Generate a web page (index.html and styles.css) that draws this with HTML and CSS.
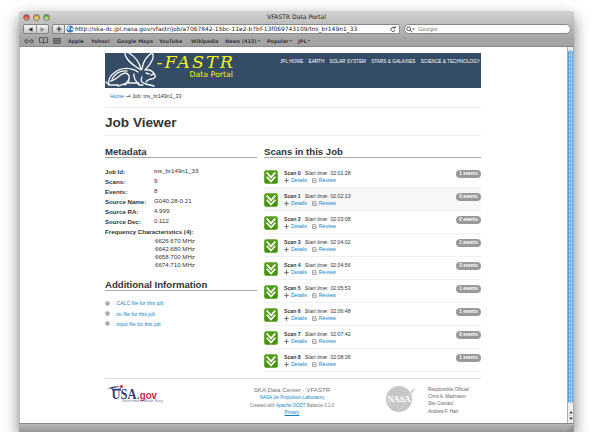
FILE: index.html
```html
<!DOCTYPE html>
<html lang="en">
<head>
<meta charset="utf-8">
<title>VFASTR Data Portal</title>
<link rel="stylesheet" href="styles.css">
</head>
<body>
<svg class="defs" width="0" height="0">
  <defs>
    <linearGradient id="leaf" x1="0" y1="0" x2="0" y2="1"><stop offset="0" stop-color="#57a01c"/><stop offset="1" stop-color="#409105"/></linearGradient>
    <symbol id="scan" viewBox="0 0 14 14"><rect x=".2" y=".2" width="13.6" height="13.6" rx="2" fill="url(#leaf)"/><path d="M2.7 2.5 7 7.4 11.3 2.5M2.7 6.8 7 11.6 11.3 6.8" fill="none" stroke="#fff" stroke-width="1.7"/></symbol>
    <symbol id="plus" viewBox="0 0 5 5"><path d="M2.5.3v4.4M.3 2.5h4.4" stroke="#777" stroke-width="1.2"/></symbol>
    <symbol id="review" viewBox="0 0 5 5"><path d="M4.3 2.4v2H.6V.6h3.2M1.4 2l1 1.1L4.5.8" fill="none" stroke="#888" stroke-width=".8"/></symbol>
    <symbol id="disc" viewBox="0 0 5 5"><circle cx="2.5" cy="2.5" r="1.8" fill="#d0d0d0" stroke="#999" stroke-width="1"/><path d="M2.5 1.4v2M1.6 2.5l.9.9.9-.9" fill="none" stroke="#888" stroke-width=".6"/></symbol>
  </defs>
</svg>
<div class="window">
  <header class="chrome">
    <div class="titlebar">
      <div class="lights"><i class="red"></i><i class="amber"></i><i class="green"></i></div>
      <span class="title">VFASTR Data Portal</span>
    </div>
    <div class="toolbar">
      <div class="nav-buttons"><span><svg width="5" height="5" viewBox="0 0 5 5"><path d="M4.5.3v4.4L.3 2.5z" fill="#333"/></svg></span><span><svg width="5" height="5" viewBox="0 0 5 5"><path d="M.5.3v4.4l4.2-2.2z" fill="#888"/></svg></span></div>
      <div class="add"><svg width="6" height="6" viewBox="0 0 6 6"><path d="M3 .5v5M.5 3h5" stroke="#333" stroke-width="1.2"/></svg></div>
      <div class="address">
        <svg width="8" height="8" viewBox="0 0 8 8"><circle cx="4" cy="4" r="3.6" fill="#3474c4"/><path d="M1 2.6 3 1l1.3.8L3.4 3l.5 1.2L2.5 5.6 1 4zM5 3l2-.5.4 2L6 6 4.8 4.6z" fill="#bfe0f5"/></svg>
        <span class="url">http://ska-dc.jpl.nasa.gov/vfastr/job/a7067842-15bc-11e2-b7bf-13f069743109/tns_br149n1_33</span>
        <svg class="reload" width="6" height="7" viewBox="0 0 6 7"><path d="M4.6 2A2.1 2.1 0 1 0 5 4M3 2h2.2V0" fill="none" stroke="#444" stroke-width=".9"/></svg>
      </div>
      <div class="search"><svg width="9" height="7" viewBox="0 0 9 7"><circle cx="2.6" cy="2.8" r="1.9" fill="none" stroke="#444" stroke-width=".9"/><path d="m4 4.2 2 2" stroke="#444"/><path d="M6 2.6h3L7.5 4z" fill="#555"/></svg><span>Google</span></div>
    </div>
    <nav class="bookmarks">
      <svg width="10" height="6" viewBox="0 0 10 6"><path d="M.5 3 3 1M9.5 3 7 1M4 3.3q1-1 2 0" fill="none" stroke="#444" stroke-width=".8"/><circle cx="2.3" cy="3.6" r="1.4" fill="none" stroke="#444" stroke-width=".8"/><circle cx="7.7" cy="3.6" r="1.4" fill="none" stroke="#444" stroke-width=".8"/></svg>
      <svg width="9" height="7" viewBox="0 0 9 7"><path d="M4.5 1.2Q3-.1.5.8v4.8q2.500-.8 4 .5 1.500-1.300 4-.5V.8Q6-.1 4.500 1.200v5" fill="none" stroke="#444" stroke-width=".8"/></svg>
      <svg width="8" height="6" viewBox="0 0 8 6"><path d="M0 .7h8M0 2.900h8M0 5.200h8M1 0v6M3 0v6M5 0v6M7 0v6" stroke="#555" stroke-width=".9"/></svg>
      <span class="b1">Apple</span><span class="b2">Yahoo!</span><span class="b3">Google Maps</span><span class="b4">YouTube</span><span class="b5">Wikipedia</span><span class="b6">News (413)<i class="caret"></i></span><span class="b7">Popular<i class="caret"></i></span><span class="b8">JPL<i class="caret"></i></span>
    </nav>
  </header>
  <div class="viewport">
    <div class="page">
      <div class="banner">
        <svg class="rabbit" width="52" height="34" viewBox="0 0 52 34" fill="none" stroke="#f5f8fa" stroke-width="1.35" stroke-linecap="round" stroke-linejoin="round"><path d="M36 17C29 13 20 6 20 0M24 0c5 3 10 8 12 16M37 16c1-7 5-13 10-16 3 3 0 10-7 17M40 17c5-1 8 1 10 5 1 2-1 4-4 4-3 1-4 1-5 3M49 21l-3 1M33 19c-7-5-17-5-24 1-4 3-6 7-5 12M4 32h9M6 28c7-2 8-7 14-8 6 1 5 7 1 10M13 33c6-1 8-4 11-3h10M29 21c-1 5 2 7 5 11h4M37 24c-2 4 0 6 4 7l8 2M22 18c-8-1-12 3-15 8M1 29l3 3M41 20l3 1M24 28l-4 4"/></svg>
        <div class="brand"><strong>-FASTR</strong><span>Data Portal</span></div>
        <nav class="topnav"><span>JPL HOME</span><span>EARTH</span><span>SOLAR SYSTEM</span><span>STARS &amp; GALAXIES</span><span>SCIENCE &amp; TECHNOLOGY</span></nav>
      </div>
      <div class="crumbs"><a>Home</a> <span class="arrow">→</span> Job: tns_br149n1_33</div>
      <h1>Job Viewer</h1>
      <div class="columns">
        <section>
          <h2>Metadata</h2>
          <dl>
            <dt>Job Id:</dt><dd>tns_br149n1_33</dd>
            <dt>Scans:</dt><dd>9</dd>
            <dt>Events:</dt><dd>8</dd>
            <dt>Source Name:</dt><dd>G040.28-0.21</dd>
            <dt>Source RA:</dt><dd>4.999</dd>
            <dt>Source Dec:</dt><dd>0.112</dd>
          </dl>
          <h3>Frequency Characteristics (4):</h3>
          <ul class="freqs"><li>6626.670 MHz</li><li>6642.680 MHz</li><li>6658.700 MHz</li><li>6674.710 MHz</li></ul>
          <h2 class="additional">Additional Information</h2>
          <ul class="files">
            <li><svg width="5" height="5"><use href="#disc"/></svg><a>.CALC file for this job</a></li>
            <li><svg width="5" height="5"><use href="#disc"/></svg><a>.im file for this job</a></li>
            <li><svg width="5" height="5"><use href="#disc"/></svg><a>.input file for this job</a></li>
          </ul>
        </section>
        <section>
          <h2>Scans in this Job</h2>
          <ul class="scans" id="scans"></ul>
        </section>
      </div>
      <footer>
        <svg class="usa" width="62" height="24" viewBox="0 0 62 24"><path d="M0 5.500Q7 1 16 2.500 9 3 6 5 4 4 0 5.500M6 5v1.500h9V4.500z" fill="#343c7d"/><text x="5.500" y="14.500" class="usa-name" textLength="25" lengthAdjust="spacingAndGlyphs">USA</text><circle cx="15.500" cy="2.500" r="1.500" fill="#d52645"/><text x="31" y="14.500" class="usa-gov" textLength="20" lengthAdjust="spacingAndGlyphs">.gov</text><text x="16" y="18" class="usa-tag" textLength="41">Government Made Easy</text></svg>
        <div class="credits"><b>SKA Data Center - VFASTR</b><a>NASA Jet Propulsion Laboratory</a><span>Created with <a>Apache OODT</a> Balance 0.2.0</span><a class="privacy">Privacy</a></div>
        <svg class="nasa" width="31" height="28" viewBox="0 0 31 28"><circle cx="14" cy="14" r="13" fill="#c6c6c6"/><path d="M3 22C11 15 18 16 30 3 23 13 21 19 13 26" fill="none" stroke="#d8d8d8" stroke-width=".7"/><path d="m30 3-5 4 2 1z" fill="#c6c6c6"/><text x="2.500" y="16.500" textLength="23" lengthAdjust="spacingAndGlyphs">NASA</text></svg>
        <div class="contacts"><span>Responsible Official:</span><span>Chris A. Mattmann</span><span>Site Contact:</span><span>Andrew F. Hart</span></div>
      </footer>
    </div>
    <div class="scrollbar"><i class="thumb"></i><i class="track"></i><svg width="6" height="13" viewBox="0 0 6 13"><path d="M1.300 4.500 3 2l1.700 2.500zM1.300 8.500h3.400L3 11z" fill="#333"/><path d="M0 6.500h6" stroke="#ccc" stroke-width=".6"/></svg></div>
  </div>
  <div class="statusbar"><svg width="7" height="7" viewBox="0 0 7 7"><path d="m0 7 7-7M2.500 7 7 2.500M5 7l2-2" stroke="#777" stroke-width=".7"/></svg></div>
</div>
<script src="scans.js"></script>
</body>
</html>
```
FILE: styles.css
```css
* { box-sizing: border-box; }
body { margin: 0; width: 593px; height: 432px; overflow: hidden; background: #fff; font-family: "Liberation Sans", sans-serif; color: #333; white-space: nowrap; }
.defs { position: absolute; }
svg { display: block; flex: none; }
ul, dl, dd { margin: 0; padding: 0; list-style: none; }
a { color: #0883cb; }
.window { width: 555px; height: 421px; margin: 11px 0 0 19px; display: flex; flex-direction: column; border-radius: 3px 3px 0 0; box-shadow: 0 6px 15px rgba(0,0,0,.5); background: #fff; }
.chrome { height: 36px; flex: none; background: linear-gradient(#d2d2d2, #a5a5a5 80%, #a3a3a3); border-bottom: 1px solid #888; border-radius: 3px 3px 0 0; font-family: "DejaVu Sans", sans-serif; }
.titlebar { height: 12px; display: grid; grid-template-columns: 245px 65px 1fr; align-items: center; }
.lights { display: flex; gap: 3px; padding-left: 4px; }
.lights i { width: 7px; height: 7px; border-radius: 50%; border: .5px solid #777; }
.red { background: radial-gradient(circle at 50% 80%, #ffa198, #e5413a 60%, #9d2620); }
.amber { background: radial-gradient(circle at 50% 80%, #ffe895, #eea237 60%, #98651f); }
.green { background: radial-gradient(circle at 50% 80%, #ceff9f, #6fbd49 60%, #417728); }
.title { font-size: 6.1px; text-align: center; line-height: 12px; color: #222; }
.toolbar { height: 12px; display: flex; align-items: center; padding-left: 4px; }
.nav-buttons, .add { height: 10px; display: flex; border: .5px solid #858585; border-radius: 2px; background: linear-gradient(#f4f4f4, #c6c6c6); }
.nav-buttons { width: 26px; }
.nav-buttons span { width: 50%; display: grid; place-items: center; }
.nav-buttons span + span { border-left: .5px solid #999; }
.add { width: 13px; margin-left: 3px; align-items: center; justify-content: center; border-radius: 2px 0 0 2px; }
.address { width: 335px; height: 10px; display: flex; align-items: center; background: #fff; border: 1px solid #888; border-left: 0; padding: 0 3px 0 1px; border-radius: 0 2px 2px 0; }
.url { font-size: 5.93px; letter-spacing: .01px; margin-left: 1px; color: #222; line-height: 8px; }
.reload { margin-left: auto; }
.search { width: 167px; height: 10px; margin-left: 4px; border: 1px solid #888; border-radius: 5px; background: #fff; display: flex; align-items: center; padding-left: 1px; gap: 3px; font-size: 5.6px; color: #777; }
.bookmarks { height: 11px; display: flex; align-items: center; padding-left: 5px; font-size: 4.95px; font-weight: 700; color: #3b3b3b; }
.bookmarks svg + svg { margin-left: 5px; }
.bookmarks span { display: flex; align-items: center; flex: none; }
.b1 { width: 23px; margin-left: 7px; }
.b2 { width: 26px; }
.b3 { width: 42px; }
.b4 { width: 32px; }
.b5 { width: 34px; }
.b6 { width: 42px; }
.b7 { width: 31px; }
.caret { border: 1.5px solid transparent; border-top: 2px solid #444; border-bottom: 0; margin-left: 1px; }
.viewport { height: 376px; flex: none; display: flex; justify-content: space-between; border-left: 1px solid #bbb; background: #fff; }
.page { width: 376px; margin-left: 85px; display: flex; flex-direction: column; }
.banner { height: 35px; margin-top: 6px; background: #344c65; display: flex; flex: none; }
.brand { width: 78px; display: flex; flex-direction: column; align-items: flex-end; color: #f4f51a; margin-left: -2px; }
.brand strong { font: italic 400 17.5px/18px "DejaVu Serif", serif; height: 16px; letter-spacing: 2.1px; margin-right: -2.1px; }
.brand span { font: 7.8px/10px "DejaVu Sans", sans-serif; padding-top: .5px; }
.topnav { display: flex; justify-content: space-between; width: 200px; margin-left: 47px; font-size: 4.7px; line-height: 17px; color: #fff; }
.crumbs { height: 20px; border-bottom: 1px solid #eee; padding-left: 5px; font-size: 5.25px; line-height: 17px; flex: none; }
.arrow { font: 6px/1 "DejaVu Sans", sans-serif; }
h1 { height: 28px; margin: 0; font-size: 13.6px; line-height: 30px; border-bottom: 1px solid #eee; }
.columns { display: grid; grid-template-columns: 152px 217px; column-gap: 7px; height: 242px; }
h2 { margin: 0; height: 22px; padding-top: 9px; font-size: 9.6px; line-height: 13px; border-bottom: 1px solid #aaa; }
dl { display: grid; grid-template-columns: 49px 1fr; grid-auto-rows: 10.1px; margin-top: 9px; font-size: 6.15px; line-height: 10px; }
dt { font-weight: 700; }
dd { margin-top: -1px; }
h3 { margin: 0; font-size: 6.15px; line-height: 10px; margin-top: -1px; }
.freqs { padding-left: 50px; font-size: 6.15px; line-height: 8.2px; }
h2.additional { padding-top: 9px; height: 22px; line-height: 14px; }
.files { margin-top: 7px; }
.files li { height: 10.2px; display: flex; align-items: center; gap: 5px; font-size: 5.15px; }
.scans { margin-top: 7px; }
.scans li { height: 23.05px; display: flex; border-bottom: 1px solid #f0f0f0; padding-top: 5px; }
.scans li:nth-child(2) { background: #f7f7f7; }
.scan-text { margin-left: 6px; flex: 1; font-size: 5.2px; }
.scan-text div { height: 7px; line-height: 7px; display: flex; align-items: center; }
.scan-text em { margin: 0 2px 0 4px; }
.actions a { margin: 0 5px 0 2px; }
.badge { width: 25px; height: 8px; border-radius: 4px; background: #999; color: #fff; font-size: 4.6px; font-weight: 700; line-height: 8px; text-align: center; }
footer { height: 44px; display: grid; grid-template-columns: 107px 160px 56px 1fr; border-top: 1px solid #ddd; }
.usa { margin: 5px 0 0 1px; }
.usa-name { font: 700 14px "Liberation Serif", serif; fill: #343c7d; }
.usa-gov { font: 700 10px "Liberation Sans", sans-serif; fill: #ca2850; }
.usa-tag { font: 3px "Liberation Sans", sans-serif; fill: #55598a; }
.credits { display: flex; flex-direction: column; align-items: center; font-size: 4.5px; line-height: 7.5px; color: #777; padding-top: 6px; }
.credits b { font-weight: 400; font-size: 6.2px; line-height: 9px; }
.privacy { text-decoration: underline; }
.nasa { margin: 6px 0 0 13px; }
.nasa text { font: 700 8px "Liberation Serif", serif; fill: #fff; }
.contacts { display: flex; flex-direction: column; font-size: 4.6px; line-height: 7.2px; color: #666; padding-top: 7px; }
.scrollbar { width: 7px; height: 376px; border: solid #aaa; border-width: 0 .5px; background: #eee; display: flex; flex-direction: column; }
.thumb { margin-top: 3px; height: 353px; border-radius: 4px; background: repeating-linear-gradient(rgba(255,255,255,.16) 0 2px, transparent 2px 4px), linear-gradient(90deg, #2a69b1, #91cbf4 28%, #56a6e7 55%, #92d9fc 75%, #4889bf); }
.track { height: 6px; }
.statusbar { height: 9px; display: flex; justify-content: flex-end; align-items: flex-end; background: linear-gradient(#b8b8b8, #989898); border-top: 1px solid #888; }
```
FILE: scans.js
```js
const scans = [
  ["02:01:28", 1], ["02:02:13", 0], ["02:03:08", 0],
  ["02:04:02", 1], ["02:04:56", 3], ["02:05:53", 1],
  ["02:06:48", 1], ["02:07:42", 0], ["02:08:36", 1]
];
document.getElementById("scans").innerHTML = scans.map(([time, events], i) => `
  <li><svg width="14" height="14"><use href="#scan"/></svg>
  <div class="scan-text"><div><b>Scan ${i}</b><em>Start time:</em>${time}</div>
  <div class="actions"><svg width="5" height="5"><use href="#plus"/></svg><a>Details</a><svg width="5" height="5"><use href="#review"/></svg><a>Review</a></div></div>
  <span class="badge">${events} events</span></li>`).join("");
```
